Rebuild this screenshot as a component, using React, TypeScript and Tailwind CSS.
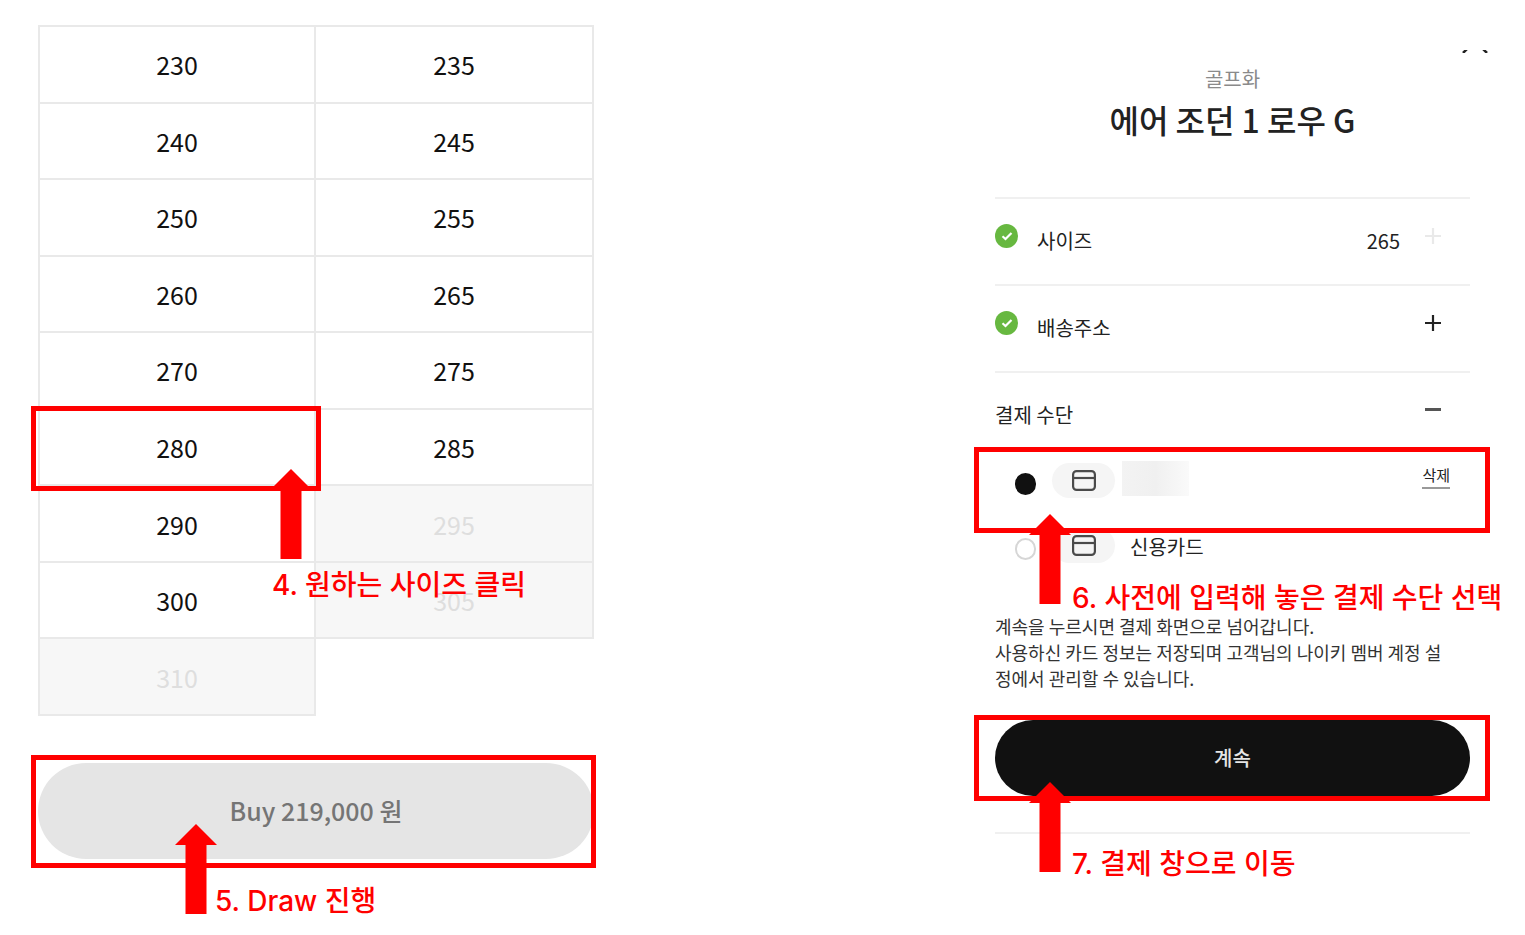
import React, { useState } from 'react'

const SIZES = [230, 235, 240, 245, 250, 255, 260, 265, 270, 275, 280, 285, 290, 295, 300, 305, 310]
const SOLD_OUT = [295, 305, 310]

const Arrow = ({ className }: { className: string }) => (
    <svg
        className={`pointer-events-none absolute z-20 ${className}`}
        width="42"
        height="90"
        viewBox="0 0 42 90"
        fill="#ff0000"
        aria-hidden="true"
    >
        <path d="M21 0 42 21H31.500V90H10.500V21H0Z" />
    </svg>
)

const Note = ({ className, children }: { className: string; children: React.ReactNode }) => (
    <p
        className={`pointer-events-none absolute z-20 whitespace-nowrap font-['Inter','Noto_Sans_CJK_KR',sans-serif] text-[28px] leading-9 font-medium text-[#ff0000] ${className}`}
    >
        {children}
    </p>
)

const Frame = ({ className }: { className: string }) => (
    <div className={`pointer-events-none absolute z-10 border-5 border-[#ff0000] ${className}`} />
)

const CheckIcon = () => (
    <svg className="shrink-0" width="23" height="24" viewBox="0 0 23 24" aria-hidden="true">
        <ellipse cx="11.5" cy="12" rx="11.5" ry="12" fill="#67b840" />
        <path d="M7.500 12.300 10.500 15 16.500 9" fill="none" stroke="#fff" strokeWidth="2.200" />
    </svg>
)

const PlusIcon = () => (
    <svg width="24" height="24" viewBox="0 0 24 24" fill="none" stroke="currentColor" strokeWidth="2.200" aria-hidden="true">
        <path d="M4 12H20M12 4V20" />
    </svg>
)

const MinusIcon = () => (
    <svg width="24" height="24" viewBox="0 0 24 24" fill="none" stroke="currentColor" strokeWidth="3" aria-hidden="true">
        <path d="M4 11.500H20" />
    </svg>
)

const CardIcon = () => (
    <span className="flex h-[35px] w-[63px] shrink-0 items-center justify-center rounded-full bg-[#f5f5f5]">
        <svg width="24" height="21" viewBox="0 0 24 21" fill="none" stroke="#4a4a4a" strokeWidth="2.200" aria-hidden="true">
            <rect x="1.1" y="1.1" width="21.8" height="18.8" rx="3.500" />
            <path d="M1 8H23" />
        </svg>
    </span>
)

const Row = ({ title, done, value, children }: { title: string; done?: boolean; value?: string; children: React.ReactNode }) => (
    <div className="flex h-[87px] items-start border-t-2 border-[#f0f0f0] pt-[25px] pr-[25px]">
        {done && <span className="mr-[19px]"><CheckIcon /></span>}
        <h2 className="flex-1 text-xl leading-[34px]">{title}</h2>
        {value && <span className="mr-[21px] text-xl leading-[34px]">{value}</span>}
        {children}
    </div>
)

const radioClass =
    "mt-[10px] h-[22px] w-[21px] shrink-0 appearance-none rounded-full border-2 border-[#d6d6d6] bg-white checked:border-[#111] checked:bg-[#111]"

const App = () => {
    const [size, setSize] = useState(280)
    const [payment, setPayment] = useState("saved")

    return (
        <main className="flex min-h-screen justify-between gap-10 overflow-hidden bg-white pr-[55px] pb-[76px] pl-[38px] font-['Noto_Sans_CJK_KR',sans-serif] text-[#222]">
            <section className="w-full max-w-[556px] pt-[25px]">
                <div className="grid h-[691px] auto-rows-fr grid-cols-2 border-t-2 border-[#e9e9e9]">
                    {SIZES.map((item) => (
                        <div key={item} className="relative odd:border-l-2 border-[#e9e9e9]">
                            <button
                                type="button"
                                disabled={SOLD_OUT.includes(item)}
                                aria-pressed={size === item}
                                onClick={() => setSize(item)}
                                className="h-full w-full border-r-2 border-b-2 border-[#e9e9e9] text-[25px] leading-9 text-[#111] disabled:bg-[#f7f7f7] disabled:text-[#dedede]"
                            >
                                {item}
                            </button>
                            {item === 280 && (
                                <>
                                    <Frame className="-top-1 -right-[5px] -bottom-[5px] -left-[9px]" />
                                    <Arrow className="top-[59px] right-[4px]" />
                                    <Note className="top-[157px] left-[232px]">4. 원하는 사이즈 클릭</Note>
                                </>
                            )}
                        </div>
                    ))}
                </div>

                <div className="relative mt-[47px]">
                    <button
                        type="button"
                        className="h-24 w-full rounded-full bg-[#e5e5e5] text-[25px] font-medium text-[#757575]"
                    >
                        Buy 219,000 원
                    </button>
                    <Frame className="-top-2 -right-[2px] -bottom-[9px] -left-[7px]" />
                    <Arrow className="top-[61px] left-[137px]" />
                    <Note className="top-[120px] left-[177px]">5. Draw 진행</Note>
                </div>
            </section>

            <section className="relative w-full max-w-[475px] pt-[65px]">
                <button type="button" aria-label="닫기" className="absolute top-[50px] -right-[18px]">
                    <svg width="26" height="3" viewBox="0 0 26 3" fill="none" stroke="#222" strokeWidth="2.500" aria-hidden="true">
                        <path d="M5-1 1 3M21-1 25 3" />
                    </svg>
                </button>
                <header className="mb-[58px] text-center">
                    <p className="text-xl leading-7 text-[#8a8a8a]">골프화</p>
                    <h1 className="mt-[6px] text-[32px] leading-10 font-medium">에어 조던 1 로우 G</h1>
                </header>

                <Row title="사이즈" done value="265">
                    <button type="button" aria-label="사이즈 열기" className="text-[#e9e9e9]"><PlusIcon /></button>
                </Row>
                <Row title="배송주소" done>
                    <button type="button" aria-label="배송주소 열기"><PlusIcon /></button>
                </Row>
                <Row title="결제 수단">
                    <button type="button" aria-label="결제 수단 닫기" className="text-[#555]"><MinusIcon /></button>
                </Row>

                <div className="relative px-5">
                    <div className="flex h-[65px] items-start pt-[5px]">
                        <input
                            id="saved"
                            type="radio"
                            name="payment"
                            aria-label="저장된 카드"
                            className={radioClass}
                            checked={payment === "saved"}
                            onChange={() => setPayment("saved")}
                        />
                        <label htmlFor="saved" className="ml-4 flex flex-1 items-start gap-[7px]">
                            <CardIcon />
                            <span className="-mt-[2px] h-[35px] w-[67px] bg-linear-to-r from-[#f3f3f3] via-[#f0f0f0] to-[#fafafa]" />
                        </label>
                        <button type="button" className="border-b-2 border-[#999] text-[15px] leading-6">
                            삭제
                        </button>
                    </div>
                    <div className="flex h-[65px] items-start pt-[5px]">
                        <input
                            id="card"
                            type="radio"
                            name="payment"
                            className={radioClass}
                            checked={payment === "card"}
                            onChange={() => setPayment("card")}
                        />
                        <label htmlFor="card" className="ml-4 flex items-start gap-[15px] text-xl leading-[38px]">
                            <CardIcon />
                            신용카드
                        </label>
                    </div>
                    <Frame className="-top-[11px] -right-5 -left-[21px] h-[86px]" />
                    <Arrow className="top-14 left-[34px]" />
                    <Note className="top-[122px] left-[77px]">6. 사전에 입력해 놓은 결제 수단 선택</Note>
                </div>

                <p className="mt-[25px] pr-6 text-lg leading-[26px] text-[#333]">
                    계속을 누르시면 결제 화면으로 넘어갑니다.
                    <br />
                    사용하신 카드 정보는 저장되며 고객님의 나이키 멤버 계정 설정에서 관리할 수 있습니다.
                </p>

                <div className="relative mt-[29px]">
                    <button type="button" className="h-[76px] w-full rounded-full bg-[#111] text-xl font-medium text-[#e5e5e5]">
                        계속
                    </button>
                    <Frame className="-inset-y-[5px] -right-5 -left-[21px]" />
                    <Arrow className="top-[62px] left-[34px]" />
                    <Note className="top-[126px] left-[77px]">7. 결제 창으로 이동</Note>
                </div>
                <hr className="mt-9 border-t-2 border-[#f0f0f0]" />
            </section>
        </main>
    )
}

export default App
